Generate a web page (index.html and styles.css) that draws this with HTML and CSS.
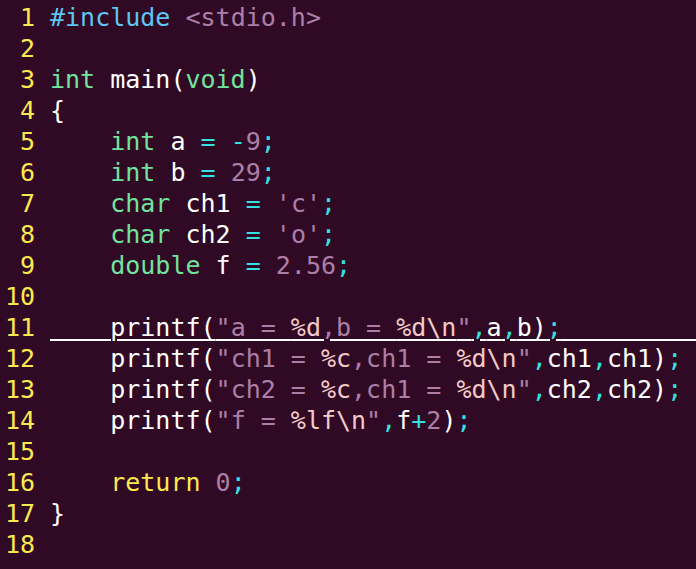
FILE: index.html
```html
<!DOCTYPE html>
<html>
<head>
<meta charset="utf-8">
<link rel="stylesheet" href="styles.css">
</head>
<body>
<div class="editor">
<div class="row"><span class="ln">1</span><span class="code"><span class="pp">#include</span> <span class="str">&lt;stdio.h&gt;</span></span></div>
<div class="row"><span class="ln">2</span><span class="code"></span></div>
<div class="row"><span class="ln">3</span><span class="code"><span class="ty">int</span> main(<span class="ty">void</span>)</span></div>
<div class="row"><span class="ln">4</span><span class="code">{</span></div>
<div class="row"><span class="ln">5</span><span class="code">    <span class="ty">int</span> a <span class="op">=</span> <span class="op">-</span><span class="str">9</span><span class="op">;</span></span></div>
<div class="row"><span class="ln">6</span><span class="code">    <span class="ty">int</span> b <span class="op">=</span> <span class="str">29</span><span class="op">;</span></span></div>
<div class="row"><span class="ln">7</span><span class="code">    <span class="ty">char</span> ch1 <span class="op">=</span> <span class="str">'c'</span><span class="op">;</span></span></div>
<div class="row"><span class="ln">8</span><span class="code">    <span class="ty">char</span> ch2 <span class="op">=</span> <span class="str">'o'</span><span class="op">;</span></span></div>
<div class="row"><span class="ln">9</span><span class="code">    <span class="ty">double</span> f <span class="op">=</span> <span class="str">2.56</span><span class="op">;</span></span></div>
<div class="row"><span class="ln">10</span><span class="code"></span></div>
<div class="row cursor"><span class="ln">11</span><span class="code"><span class="under">    printf(<span class="str">"a = <span class="sp">%d</span>,b = <span class="sp">%d\n</span>"</span><span class="op">,</span>a<span class="op">,</span>b)<span class="op">;</span></span><span class="fill"></span></span></div>
<div class="row"><span class="ln">12</span><span class="code">    printf(<span class="str">"ch1 = <span class="sp">%c</span>,ch1 = <span class="sp">%d\n</span>"</span><span class="op">,</span>ch1<span class="op">,</span>ch1)<span class="op">;</span></span></div>
<div class="row"><span class="ln">13</span><span class="code">    printf(<span class="str">"ch2 = <span class="sp">%c</span>,ch1 = <span class="sp">%d\n</span>"</span><span class="op">,</span>ch2<span class="op">,</span>ch2)<span class="op">;</span></span></div>
<div class="row"><span class="ln">14</span><span class="code">    printf(<span class="str">"f = <span class="sp">%lf\n</span>"</span><span class="op">,</span>f<span class="op">+</span><span class="str">2</span>)<span class="op">;</span></span></div>
<div class="row"><span class="ln">15</span><span class="code"></span></div>
<div class="row"><span class="ln">16</span><span class="code">    <span class="kw">return</span> <span class="str">0</span><span class="op">;</span></span></div>
<div class="row"><span class="ln">17</span><span class="code">}</span></div>
<div class="row"><span class="ln">18</span><span class="code"></span></div>
</div>
</body>
</html>
```
FILE: styles.css
```css
html, body {
  margin: 0;
  padding: 0;
  background: #300a24;
}
body {
  width: 696px;
  height: 569px;
  overflow: hidden;
}
.editor {
  padding-top: 2px;
  font-family: "DejaVu Sans Mono", monospace;
  font-size: 25px;
  line-height: 31px;
  color: #ffffff;
}
.row {
  display: flex;
  align-items: flex-start;
  height: 31px;
  white-space: pre;
}
.ln {
  width: 35px;
  flex: none;
  text-align: right;
  color: #fce94f;
}
.code {
  flex: 1;
  display: block;
  padding-left: 15px;
}
.cursor .code {
  display: flex;
  align-items: flex-start;
}
.pp { color: #5ec6f2; }
.ty { color: #72e39c; }
.kw { color: #fce94f; }
.str { color: #ad7fa8; }
.sp { color: #f4c9c9; }
.op { color: #34e2e2; }
.under {
  text-decoration: underline;
  text-decoration-thickness: 2px;
  text-underline-offset: 3px;
}
.fill {
  flex: 1;
  height: 29px;
  box-sizing: border-box;
  border-bottom: 2px solid #ffffff;
}
```
